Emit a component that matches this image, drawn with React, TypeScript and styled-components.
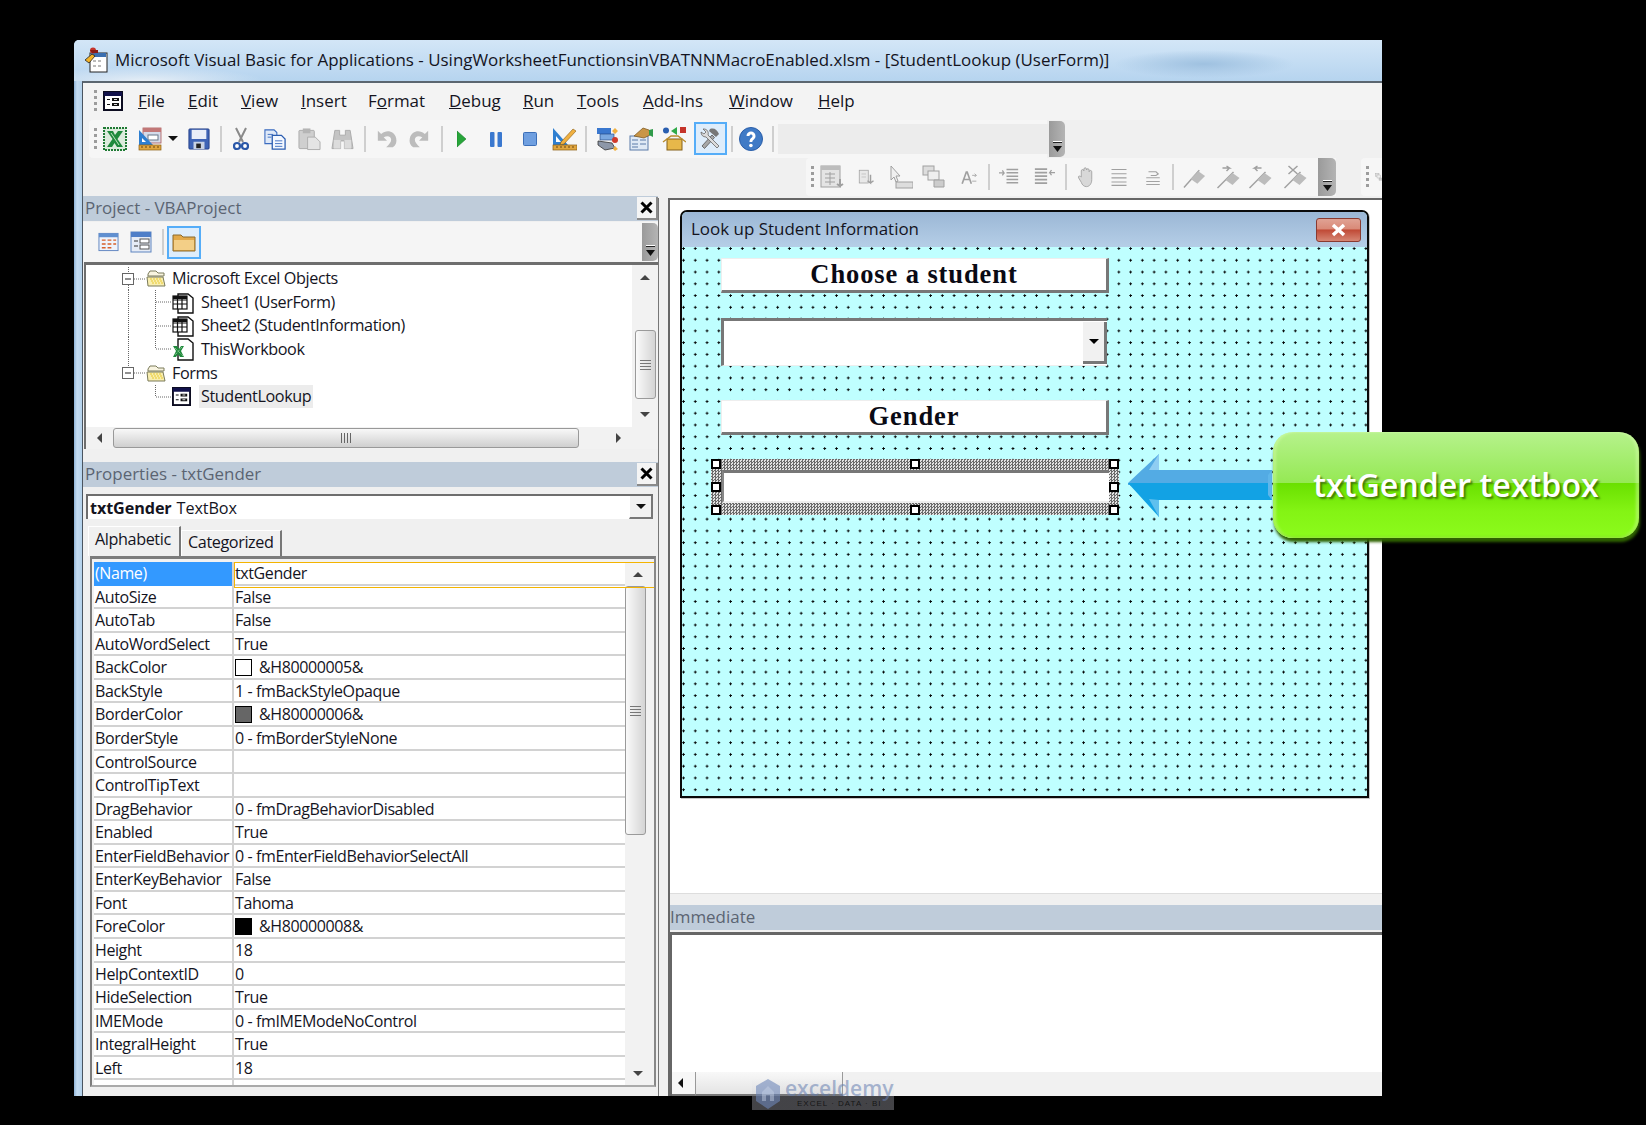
import React from "react";
import styled, { createGlobalStyle } from "styled-components";

const GlobalStyle = createGlobalStyle`
  html, body {
    margin: 0;
    padding: 0;
    background: #000;
    overflow: hidden;
  }
  * { box-sizing: border-box; }
`;

const uiFont = `"Open Sans", "Liberation Sans", sans-serif`;

const propRows: { name: string; value: string; swatch?: string }[] = [
  { name: "AutoSize", value: "False" },
  { name: "AutoTab", value: "False" },
  { name: "AutoWordSelect", value: "True" },
  { name: "BackColor", value: "&H80000005&", swatch: "#fff" },
  { name: "BackStyle", value: "1 - fmBackStyleOpaque" },
  { name: "BorderColor", value: "&H80000006&", swatch: "#666" },
  { name: "BorderStyle", value: "0 - fmBorderStyleNone" },
  { name: "ControlSource", value: "" },
  { name: "ControlTipText", value: "" },
  { name: "DragBehavior", value: "0 - fmDragBehaviorDisabled" },
  { name: "Enabled", value: "True" },
  { name: "EnterFieldBehavior", value: "0 - fmEnterFieldBehaviorSelectAll" },
  { name: "EnterKeyBehavior", value: "False" },
  { name: "Font", value: "Tahoma" },
  { name: "ForeColor", value: "&H80000008&", swatch: "#000" },
  { name: "Height", value: "18" },
  { name: "HelpContextID", value: "0" },
  { name: "HideSelection", value: "True" },
  { name: "IMEMode", value: "0 - fmIMEModeNoControl" },
  { name: "IntegralHeight", value: "True" },
  { name: "Left", value: "18" },
  { name: "Locked", value: "False" },
];

const menuItems = [
  { key: "F", rest: "ile", w: 50 },
  { key: "E", rest: "dit", w: 53 },
  { key: "V", rest: "iew", w: 60 },
  { key: "I", rest: "nsert", w: 67 },
  { pre: "F", key: "o", rest: "rmat", w: 81 },
  { key: "D", rest: "ebug", w: 74 },
  { key: "R", rest: "un", w: 54 },
  { key: "T", rest: "ools", w: 66 },
  { key: "A", rest: "dd-Ins", w: 86 },
  { key: "W", rest: "indow", w: 89 },
  { key: "H", rest: "elp", w: 50 },
];

/* ---------- layout ---------- */

const Page = styled.div`
  position: relative;
  width: 1646px;
  height: 1125px;
  background: #000;
  padding: 40px 0 0 74px;
  font-family: ${uiFont};
  color: #14141e;
`;

const Window = styled.div`
  width: 1308px;
  height: 1056px;
  display: flex;
  flex-direction: column;
  background: linear-gradient(90deg, #8fb4d8 0, #c4dcf2 3px, #b4d2ec 8px);
  border-top-left-radius: 5px;
  overflow: hidden;
`;

const TitleBar = styled.div`
  height: 41px;
  flex: none;
  display: flex;
  align-items: center;
  padding: 0 0 2px 10px;
  gap: 7px;
  font-size: 16.95px;
  white-space: nowrap;
  background:
    radial-gradient(ellipse 90px 14px at 1130px 24px, #9fc1e0 0, transparent 100%),
    radial-gradient(ellipse 120px 14px at 70px 41px, #e6eef6 0, transparent 100%),
    linear-gradient(180deg, #d3e6f7 0, #b6d4ef 100%);
`;

const Body = styled.div`
  flex: 1;
  min-height: 0;
  margin-left: 8px;
  display: flex;
  flex-direction: column;
  background: #f0f0f0;
  border-top: 2px solid #5b6670;
  border-left: 1px solid #4b5560;
`;

const MenuBar = styled.div`
  height: 37px;
  flex: none;
  display: flex;
  align-items: center;
  padding: 0 0 2px 6px;
  font-size: 16.95px;
  background: #f3f3f3;
`;

const MenuItem = styled.div<{ $w: number }>`
  width: ${(p) => p.$w}px;
  flex: none;
  white-space: nowrap;
`;

const MenuIconWrap = styled.div`
  margin: 0 15px 0 0;
  display: flex;
`;

const ToolbarRow = styled.div`
  height: 38px;
  flex: none;
  display: flex;
  align-items: center;
  background: #f0f0f0;
`;

const Toolbar = styled.div<{ $ml?: number; $w: number }>`
  margin-left: ${(p) => p.$ml ?? 0}px;
  width: ${(p) => p.$w}px;
  height: 100%;
  flex: none;
  display: flex;
  align-items: center;
  padding-bottom: 1px;
  background: #f6f6f6;
  border-radius: 4px 0 0 4px;
`;

const Gripper = styled.div<{ $h?: number }>`
  width: 3px;
  height: ${(p) => p.$h ?? 22}px;
  margin-left: 5px;
  margin-right: 6px;
  flex: none;
  background: repeating-linear-gradient(180deg, #9c9c9c 0 3px, transparent 3px 6px);
`;

const ToolSlot = styled.div<{ $ml: number; $w: number }>`
  margin-left: ${(p) => p.$ml}px;
  width: ${(p) => p.$w}px;
  height: 24px;
  flex: none;
  display: flex;
  align-items: center;
  justify-content: center;
  svg { display: block; width: 100%; height: 100%; }
`;

const ToolSep = styled.div<{ $ml: number }>`
  margin-left: ${(p) => p.$ml}px;
  width: 2px;
  height: 26px;
  flex: none;
  background: #cfcfcf;
`;

const ActiveTool = styled.div<{ $ml: number; $w: number; $h: number }>`
  margin-left: ${(p) => p.$ml}px;
  width: ${(p) => p.$w}px;
  height: ${(p) => p.$h}px;
  flex: none;
  display: flex;
  align-items: center;
  justify-content: center;
  background: #deedfb;
  border: 2px solid #55adf8;
  svg { display: block; }
`;

const ChevronGrip = styled.div<{ $w: number; $h: number }>`
  width: ${(p) => p.$w}px;
  height: ${(p) => p.$h}px;
  flex: none;
  display: flex;
  align-items: flex-end;
  justify-content: center;
  padding-bottom: 3px;
  background: linear-gradient(90deg, #9a9a9a, #b4b4b4);
  border-radius: 0 5px 5px 0;
`;

const DisabledField = styled.div<{ $ml: number; $w: number }>`
  margin-left: ${(p) => p.$ml}px;
  width: ${(p) => p.$w}px;
  height: 30px;
  flex: none;
  background: #ececec;
`;

const Panes = styled.div`
  flex: 1;
  min-height: 0;
  display: flex;
`;

const LeftCol = styled.div`
  width: 575px;
  flex: none;
  display: flex;
  flex-direction: column;
  padding-bottom: 5px;
`;

const Splitter = styled.div`
  width: 12px;
  flex: none;
  background: #f0f0f0;
  border-left: 1px solid #777;
  border-right: 2px solid #666;
  margin-top: 2px;
`;

const RightCol = styled.div`
  flex: 1;
  min-width: 0;
  display: flex;
  flex-direction: column;
`;

const PaneTitle = styled.div<{ $mt?: number }>`
  height: 25px;
  flex: none;
  margin-top: ${(p) => p.$mt ?? 0}px;
  display: flex;
  align-items: center;
  justify-content: space-between;
  padding-left: 2px;
  font-size: 16.95px;
  color: #5b6472;
  background: #bfccda;
  > span { margin-top: -3px; }
`;

const CloseBox = styled.div`
  width: 21px;
  height: 23px;
  display: flex;
  align-items: center;
  justify-content: center;
  background: #f4f4f4;
  border-right: 2px solid #8a8a8a;
  border-bottom: 2px solid #8a8a8a;
`;

const ProjectBar = styled.div`
  height: 40px;
  flex: none;
  margin-top: 1px;
  display: flex;
  align-items: center;
  background: #f5f5f5;
`;

const ProjectTool = styled.div<{ $ml: number; $w: number }>`
  margin-left: ${(p) => p.$ml}px;
  width: ${(p) => p.$w}px;
  height: 22px;
  flex: none;
  svg { display: block; width: 100%; height: 100%; }
`;

const Spacer = styled.div`
  flex: 1;
`;

const TreePane = styled.div`
  height: 187px;
  flex: none;
  margin-left: 1px;
  display: flex;
  flex-direction: column;
  border-top: 3px solid #6e6e6e;
  border-left: 2px solid #6e6e6e;
`;

const TreeMain = styled.div`
  flex: 1;
  min-height: 0;
  display: flex;
`;

const TreeList = styled.div`
  flex: 1;
  background: #fff;
  padding-top: 2px;
  display: grid;
  grid-auto-rows: 23.57px;
  align-content: start;
`;

const TreeRow = styled.div`
  display: flex;
  align-items: center;
  font-size: 16.2px;
  letter-spacing: -0.4px;
  white-space: nowrap;
  svg { display: block; flex: none; }
`;

const TreeText = styled.span<{ $ml: number; $selected?: boolean }>`
  margin-left: ${(p) => p.$ml}px;
  padding: 0 2px;
  line-height: 23px;
  background: ${(p) => (p.$selected ? "#ececec" : "transparent")};
`;

const VScroll = styled.div<{ $w: number }>`
  width: ${(p) => p.$w}px;
  flex: none;
  display: flex;
  flex-direction: column;
  align-items: center;
  background: #f2f2f2;
`;

const ScrollArrow = styled.div<{ $h: number }>`
  height: ${(p) => p.$h}px;
  flex: none;
  display: flex;
  align-items: center;
  justify-content: center;
`;

const Triangle = styled.div<{ $dir: "up" | "down" | "left" | "right"; $color?: string }>`
  width: 0;
  height: 0;
  border-style: solid;
  border-color: transparent;
  ${(p) => {
    const c = p.$color ?? "#444";
    if (p.$dir === "up") return `border-width: 0 5px 5px 5px; border-bottom-color: ${c};`;
    if (p.$dir === "down") return `border-width: 5px 5px 0 5px; border-top-color: ${c};`;
    if (p.$dir === "left") return `border-width: 5px 5px 5px 0; border-right-color: ${c};`;
    return `border-width: 5px 0 5px 5px; border-left-color: ${c};`;
  }}
`;

const VThumb = styled.div<{ $w: number; $h: number; $start?: boolean }>`
  width: ${(p) => p.$w}px;
  height: ${(p) => p.$h}px;
  flex: none;
  align-self: ${(p) => (p.$start ? "flex-start" : "center")};
  display: flex;
  align-items: center;
  justify-content: center;
  background: linear-gradient(90deg, #fafafa, #d4d4d4);
  border: 1px solid #9a9a9a;
  border-radius: 3px;
`;

const GripLines = styled.div`
  width: 11px;
  height: 10px;
  background: repeating-linear-gradient(180deg, #777 0 1px, transparent 1px 3px);
`;

const HScroll = styled.div`
  height: 22px;
  flex: none;
  display: flex;
  align-items: center;
  padding-right: 1px;
  background: #f2f2f2;
`;

const HArrow = styled.div<{ $w: number }>`
  width: ${(p) => p.$w}px;
  flex: none;
  display: flex;
  justify-content: center;
`;

const HThumb = styled.div`
  flex: 1;
  height: 20px;
  display: flex;
  align-items: center;
  justify-content: center;
  background: linear-gradient(180deg, #f8f8f8, #cfcfcf);
  border: 1px solid #999;
  border-radius: 3px;
`;

const GripLinesV = styled.div`
  width: 10px;
  height: 10px;
  background: repeating-linear-gradient(90deg, #666 0 1px, transparent 1px 3px);
`;

const PropsCombo = styled.div`
  height: 25px;
  flex: none;
  margin: 7px 5px 0 3px;
  display: flex;
  align-items: center;
  padding-left: 2px;
  font-size: 16.2px;
  letter-spacing: -0.1px;
  background: #fff;
  border-top: 2px solid #6e6e6e;
  border-left: 2px solid #6e6e6e;
  strong { font-weight: 700; margin-right: 5px; }
`;

const ComboButton = styled.div<{ $w: number }>`
  margin-left: auto;
  width: ${(p) => p.$w}px;
  height: 100%;
  flex: none;
  display: flex;
  align-items: center;
  justify-content: center;
  background: #f1f1f1;
  border-right: 2px solid #777;
  border-bottom: 2px solid #777;
  border-left: 1px solid #fff;
`;

const Tabs = styled.div`
  height: 32px;
  flex: none;
  margin: 5px 0 0 5px;
  display: flex;
  align-items: flex-end;
  font-size: 16.2px;
  letter-spacing: -0.4px;
`;

const Tab = styled.div<{ $active?: boolean; $w: number }>`
  width: ${(p) => p.$w}px;
  height: ${(p) => (p.$active ? 30 : 26)}px;
  display: flex;
  align-items: center;
  padding-left: 6px;
  padding-bottom: ${(p) => (p.$active ? 5 : 3)}px;
  white-space: nowrap;
  border-right: 2px solid #777;
  border-top: 1px solid #fff;
  border-left: 1px solid #fff;
`;

const GridFrame = styled.div`
  position: relative;
  height: 531px;
  flex: none;
  margin: 0 2px 0 7px;
  padding: 3px 3px 0 2px;
  display: flex;
  border-top: 3px solid #7c7c7c;
  border-left: 2px solid #7c7c7c;
  border-right: 2px solid #888;
  border-bottom: 2px solid #aaa;
  overflow: hidden;
  background: #f2f2f2;
`;

const GridRows = styled.div`
  width: 531px;
  flex: none;
  display: grid;
  grid-auto-rows: 23.57px;
  align-content: start;
  background: #fff;
`;

const GridRow = styled.div`
  display: grid;
  grid-template-columns: 140px 1fr;
  border-bottom: 2px solid #d2d2d2;
  font-size: 16px;
  letter-spacing: -0.4px;
  white-space: nowrap;
`;

const NameCell = styled.div<{ $selected?: boolean }>`
  display: flex;
  align-items: center;
  padding: 0 0 2px 1px;
  color: ${(p) => (p.$selected ? "#fff" : "inherit")};
  background: ${(p) => (p.$selected ? "#3399ff" : "transparent")};
  border-right: 2px solid #d2d2d2;
`;

const ValueCell = styled.div`
  display: flex;
  align-items: center;
  padding: 0 0 2px 1px;
`;

const Swatch = styled.div<{ $color: string }>`
  width: 17px;
  height: 17px;
  margin: 0 7px 0 0;
  flex: none;
  background: ${(p) => p.$color};
  border: 1px solid #000;
`;

const FocusRing = styled.div`
  position: absolute;
  left: 142px;
  top: 3px;
  width: 421px;
  height: 26px;
  border: 1px solid #f4b400;
  pointer-events: none;
`;

/* ---------- MDI side ---------- */

const MdiArea = styled.div`
  height: 695px;
  flex: none;
  margin-top: 2px;
  padding: 10px 0 0 10px;
  background: #fff;
  border-top: 2px solid #666;
`;

const UserForm = styled.div`
  width: 689px;
  height: 588px;
  display: flex;
  flex-direction: column;
  border: 2px solid #0a0a0a;
  border-radius: 7px 7px 0 0;
  background: #bfffff;
  overflow: hidden;
  box-shadow: 1px 1px 0 #c8c8c8;
`;

const FormTitle = styled.div`
  height: 35px;
  flex: none;
  display: flex;
  align-items: center;
  justify-content: space-between;
  padding: 0 6px 0 9px;
  font-size: 16.95px;
  background: linear-gradient(180deg, #9bb7d5, #b5cee7);
  > span { margin-top: -3px; }
`;

const FormClose = styled.div`
  width: 45px;
  height: 24px;
  display: flex;
  align-items: center;
  justify-content: center;
  border: 1px solid #8a3a30;
  border-radius: 3px;
  background: linear-gradient(180deg, #e0a294 0, #d98a78 45%, #c04a36 50%, #d68674 100%);
`;

const FormCanvas = styled.div`
  flex: 1;
  display: flex;
  flex-direction: column;
  align-items: flex-start;
  padding: 11px 0 0 39px;
  background-color: #bfffff;
  background-image: radial-gradient(circle at 1.5px 1.5px, #000 0.95px, transparent 1.25px);
  background-size: 11.77px 11.77px;
  background-position: 0 0;
`;

const FormLabel = styled.div<{ $mt?: number }>`
  width: 388px;
  height: 35px;
  margin-top: ${(p) => p.$mt ?? 0}px;
  flex: none;
  display: flex;
  align-items: center;
  justify-content: center;
  padding-bottom: 1px;
  font-family: "Liberation Serif", "DejaVu Serif", serif;
  font-weight: 700;
  font-size: 26.5px;
  letter-spacing: 0.9px;
  color: #0a0a14;
  background: #fff;
  border-right: 3px solid #777;
  border-bottom: 3px solid #777;
  border-top: 1px solid #eee;
  border-left: 1px solid #eee;
`;

const FormCombo = styled.div`
  width: 386px;
  height: 48px;
  margin-top: 25px;
  flex: none;
  display: flex;
  justify-content: flex-end;
  padding: 1px 0 1px 0;
  background: #fff;
  border-top: 3px solid #777;
  border-left: 3px solid #777;
  border-bottom: 1px solid #eee;
`;

const FormDrop = styled.div`
  width: 24px;
  flex: none;
  display: flex;
  align-items: center;
  justify-content: center;
  background: #f1f1f1;
  border-right: 3px solid #777;
  border-bottom: 3px solid #777;
`;

const SelectionFrame = styled.div`
  position: relative;
  width: 408px;
  height: 56px;
  margin: 24px 0 0 -10px;
  flex: none;
  padding: 11px 10px 12px 11px;
  background: repeating-conic-gradient(#6a6a6a 0 25%, #e2e2e2 0 50%) 0 0 / 3px 3px;
`;

const SelectedTextBox = styled.div`
  height: 100%;
  background: #fff;
  border-top: 3px solid #777;
  border-left: 2px solid #888;
  border-bottom: 2px solid #eee;
`;

const Handle = styled.div<{ $x: "l" | "c" | "r"; $y: "t" | "m" | "b" }>`
  position: absolute;
  width: 10px;
  height: 10px;
  background: #fff;
  border: 2px solid #000;
  ${(p) => (p.$x === "l" ? "left: 0;" : p.$x === "r" ? "right: 0;" : "left: calc(50% - 5px);")}
  ${(p) => (p.$y === "t" ? "top: 0;" : p.$y === "b" ? "bottom: 0;" : "top: calc(50% - 5px);")}
`;

const MdiGap = styled.div`
  height: 12px;
  flex: none;
  background: #f0f0f0;
  border-top: 1px solid #ddd;
`;

const ImmediateTitle = styled(PaneTitle)`
  justify-content: flex-start;
  padding-left: 0;
`;

const ImmediateBody = styled.div`
  flex: 1;
  min-height: 0;
  margin-top: 2px;
  display: flex;
  flex-direction: column;
  justify-content: flex-end;
  background: #fff;
  border-top: 3px solid #666;
  border-left: 2px solid #666;
`;

const ImmediateScroll = styled.div`
  height: 24px;
  flex: none;
  display: flex;
  background: #f1f1f1;
`;

const ImmediateArrow = styled.div`
  width: 24px;
  display: flex;
  align-items: center;
  padding-left: 6px;
  background: #f7f7f7;
  border-right: 1px solid #999;
  border-bottom: 2px solid #777;
`;

const ImmediateThumb = styled.div`
  width: 147px;
  background: linear-gradient(180deg, #f8f8f8, #e4e4e4);
  border-right: 1px solid #999;
  border-bottom: 2px solid #777;
`;

/* ---------- overlays ---------- */

const ArrowOverlay = styled.svg`
  position: absolute;
  left: 1126px;
  top: 452px;
`;

const Callout = styled.div`
  position: absolute;
  left: 1273px;
  top: 432px;
  width: 366px;
  height: 106px;
  display: flex;
  align-items: center;
  justify-content: center;
  padding: 0 0 2px 0;
  border-radius: 20px;
  font-size: 32.2px;
  font-weight: 600;
  color: #fff;
  text-shadow: 2px 2px 2px rgba(50, 90, 0, 0.75);
  white-space: nowrap;
  background: linear-gradient(180deg, #b6f28c 0, #95e954 48%, #6ae000 48.5%, #84f414 75%, #8cfb1c 100%);
  box-shadow: inset 0 -2px 2px rgba(110, 200, 10, 0.3), inset 3px 0 3px rgba(220, 255, 180, 0.45),
    inset -3px 0 3px rgba(220, 255, 180, 0.45), 1px 4px 3px #2f6400;
`;

const Watermark = styled.div`
  position: absolute;
  left: 752px;
  top: 1078px;
  width: 142px;
  height: 32px;
  display: flex;
  align-items: flex-start;
  padding-left: 3px;
  background: linear-gradient(180deg, rgba(120, 130, 160, 0) 0, rgba(120, 130, 160, 0.05) 55%, rgba(90, 90, 95, 0.75) 56%, rgba(90, 90, 95, 0.75) 100%);
  svg { flex: none; margin-top: 1px; }
`;

const WatermarkText = styled.div`
  margin-left: 4px;
  display: flex;
  flex-direction: column;
  align-items: center;
  line-height: 1;
`;

const WatermarkName = styled.span`
  font-size: 21px;
  font-weight: 600;
  color: rgba(100, 125, 175, 0.55);
  line-height: 20px;
`;

const WatermarkTag = styled.span`
  margin-top: 2px;
  font-family: "Liberation Sans", sans-serif;
  font-size: 8px;
  letter-spacing: 1px;
  color: rgba(15, 15, 15, 0.9);
`;

/* ---------- icons ---------- */

const TitleIcon = () => (
  <svg width="24" height="26" viewBox="0 0 24 26">
    <rect x="6" y="6" width="17" height="19" fill="#fff" stroke="#222" />
    <rect x="7" y="6" width="15" height="4" fill="#3b6fb0" />
    <g fill="#bbb">
      <rect x="9" y="13" width="3" height="2" /><rect x="14" y="13" width="3" height="2" />
      <rect x="9" y="18" width="3" height="2" /><rect x="14" y="18" width="3" height="2" />
    </g>
    <path d="M1 13l7-6 3 2-6 7z" fill="#f3b32a" stroke="#222" strokeWidth=".8" />
    <circle cx="9" cy="3.5" r="3" fill="#c5342a" />
    <path d="M6 3h8v3H8z" fill="#8b1c16" />
  </svg>
);

const FormIcon = ({ size = 20 }: { size?: number }) => (
  <svg width={size} height={size} viewBox="0 0 20 20">
    <rect x="1" y="1" width="18" height="18" fill="#fff" stroke="#0c0c20" strokeWidth="2" />
    <rect x="1" y="1" width="18" height="4" fill="#11114a" />
    <path d="M4 8h3v1H4zM4 13h3v1H4zM9 7h7v3H9zM9 12h7v3H9z" fill="#111" />
    <path d="M11 8h3v1h-3zM11 13h3v1h-3z" fill="#ddd" />
  </svg>
);

const ExcelIcon = () => (
  <svg viewBox="0 0 24 24">
    <rect x="1" y="1" width="22" height="22" fill="#dcebdc" stroke="#1f7a34" strokeWidth="2" strokeDasharray="2 1" />
    <path d="M4 4h6l2 4 3-4h5l-5.500 8L20 20h-6l-2.500-4-2.500 4H4l5.500-8z" fill="#1f8a3c" />
    <path d="M8 6l8 12" stroke="#bfe3bf" />
  </svg>
);

const DesignFormIcon = () => (
  <svg viewBox="0 0 24 24">
    <rect x="5" y="1" width="18" height="15" fill="#d4dbea" stroke="#a55" strokeWidth=".8" />
    <rect x="5" y="1" width="18" height="4" fill="#c27878" />
    <rect x="10" y="8" width="10" height="5" fill="#fff" stroke="#678" />
    <path d="M1 3l14 15H1z" fill="#2f7fd0" />
    <path d="M4 11l4 4H4z" fill="#fff" />
    <rect x="1" y="18" width="22" height="5" fill="#e0a640" stroke="#8a5c10" strokeWidth=".7" />
    <path d="M4 19v2M8 19v2M12 19v2M16 19v2M20 19v2" stroke="#6b4510" />
  </svg>
);

const SaveIcon = () => (
  <svg viewBox="0 0 24 24">
    <rect x="1" y="1" width="22" height="22" rx="1" fill="#3e63b5" stroke="#24408a" />
    <rect x="4" y="2" width="16" height="10" fill="#e9eef8" />
    <rect x="6" y="15" width="12" height="8" fill="#c8d2e4" />
    <rect x="9" y="17" width="5" height="5" fill="#222" />
  </svg>
);

const CutIcon = () => (
  <svg viewBox="0 0 16 24">
    <path d="M3 1l7 14M13 1L6 15" stroke="#8a8a8a" strokeWidth="2" fill="none" />
    <circle cx="4" cy="19" r="3" fill="#fff" stroke="#2a57a8" strokeWidth="2.2" />
    <circle cx="12" cy="19" r="3" fill="#fff" stroke="#2a57a8" strokeWidth="2.2" />
  </svg>
);

const CopyIcon = () => (
  <svg viewBox="0 0 24 24">
    <path d="M1 2h10l3 3v12H1z" fill="#dfe9f8" stroke="#3b6cc0" strokeWidth="1.2" />
    <path d="M9 8h10l4 4v11H9z" fill="#f4f8ff" stroke="#2b5db0" strokeWidth="1.4" />
    <path d="M4 7h6M4 10h4M12 14h8M12 17h8M12 20h8" stroke="#3b6cc0" />
  </svg>
);

const PasteIcon = () => (
  <svg viewBox="0 0 24 24">
    <rect x="1" y="3" width="16" height="19" rx="1" fill="#cfcfcf" stroke="#aaa" />
    <rect x="5" y="1" width="8" height="5" fill="#b5b5b5" />
    <path d="M10 10h8l5 5v8H10z" fill="#e4e4e4" stroke="#adadad" />
  </svg>
);

const FindIcon = () => (
  <svg viewBox="0 0 24 24">
    <path d="M4 3h5v5h6V3h5l3 19h-9v-8h-4v8H1z" fill="#c4c4c4" stroke="#aaa" />
    <rect x="3" y="13" width="7" height="9" fill="#dcdcdc" />
    <rect x="14" y="13" width="7" height="9" fill="#dcdcdc" />
  </svg>
);

const UndoIcon = ({ flip }: { flip?: boolean }) => (
  <svg viewBox="0 0 24 24">
    <g transform={flip ? "translate(24 0) scale(-1 1)" : undefined}>
      <path d="M1 2v12h11L8 10c5-3 9-1 9 3 0 3-3 6-6 9h8c4-3 5-7 4-11C21 3 12 0 5 6z" fill="#bcbcbc" />
    </g>
  </svg>
);

const RunIcon = () => (
  <svg viewBox="0 0 9 24">
    <path d="M0 4l9 8-9 8z" fill="#27a53a" stroke="#1a7f2a" strokeWidth=".6" />
  </svg>
);

const PauseIcon = () => (
  <svg viewBox="0 0 12 24">
    <rect x="0" y="5" width="4.500" height="15" rx="1" fill="#3a78cf" />
    <rect x="7.500" y="5" width="4.500" height="15" rx="1" fill="#3a78cf" />
  </svg>
);

const StopIcon = () => (
  <svg viewBox="0 0 14 24">
    <rect x="0.500" y="5.500" width="13" height="13" rx="1" fill="#6f9fe0" stroke="#3c6fb8" />
  </svg>
);

const DesignIcon = () => (
  <svg viewBox="0 0 25 24">
    <path d="M1 1l15 17H1z" fill="#2f7fd0" />
    <path d="M4 9l5 6H4z" fill="#fff" />
    <path d="M9 15L21 2l3 2-12 13-4 1z" fill="#f0b040" stroke="#8a5c10" strokeWidth=".6" />
    <rect x="1" y="18" width="24" height="5" fill="#e0a640" stroke="#8a5c10" strokeWidth=".7" />
    <path d="M5 19v2M9 19v2M13 19v2M17 19v2M21 19v2" stroke="#6b4510" />
  </svg>
);

const ExplorerIcon = () => (
  <svg viewBox="0 0 24 24">
    <rect x="1" y="1" width="14" height="6" fill="#3a78cf" />
    <rect x="4" y="7" width="14" height="6" fill="#7aa8e0" stroke="#1d3f7a" strokeWidth=".6" />
    <path d="M2 14l14 2 3 5-10 2-7-5z" fill="#8d97a8" stroke="#333" strokeWidth=".8" />
    <path d="M19 1l3 3-3 3-3-3zM19 19l3 3-3 2-2-2z" fill="#f0b040" />
    <circle cx="19" cy="13" r="3" fill="#d23a2a" />
  </svg>
);

const PropsIcon = () => (
  <svg viewBox="0 0 24 24">
    <rect x="1" y="9" width="18" height="14" fill="#dfe9f5" stroke="#5b7ba8" />
    <path d="M3 13h6M11 13h6M3 17h6M11 17h6M3 20h6" stroke="#5b7ba8" />
    <path d="M5 9L14 1l6 2 3 4-8 4z" fill="#c99545" stroke="#75521a" strokeWidth=".7" />
    <path d="M20 3l4-1v8l-4-2z" fill="#2f9a4a" />
  </svg>
);

const BrowserIcon = () => (
  <svg viewBox="0 0 24 24">
    <rect x="5" y="12" width="15" height="11" fill="#e7b84a" stroke="#84601a" />
    <path d="M5 12l-4 3M20 12l4 3M5 12l4-3h7l4 3" fill="none" stroke="#b98c2c" strokeWidth="1.4" />
    <circle cx="4" cy="3.5" r="3" fill="#2a5fb0" />
    <path d="M9 4l6-4v8z" fill="#2faa48" />
    <rect x="18" y="0" width="6" height="6" fill="#c5342a" />
  </svg>
);

const ToolsIcon = () => (
  <svg width="25" height="25" viewBox="0 0 25 25">
    <path d="M4 20L14 9l2.500 2.500L6.500 22.500z" fill="#a8a8a8" stroke="#555" strokeWidth=".8" />
    <path d="M12 3c4-1.500 7 .5 9 5l-3 3-7-6z" fill="#777" />
    <path d="M21 20L10 9c1-3-1-6-4-6l-1 0 3 3-2 2-3-2c0 3 2 5 5 5l11 11z" fill="#dcdcdc" stroke="#666" strokeWidth=".8" />
  </svg>
);

const HelpIcon = () => (
  <svg viewBox="0 0 24 24">
    <circle cx="12" cy="12" r="11.500" fill="#3f7ac6" stroke="#2b5ea8" />
    <path d="M7.500 9c0-6 9-6 9 0 0 3.500-3.200 3.500-3.200 6h-2.800c0-4 3-4 3-6 0-2-3-2-3 0z" fill="#fff" />
    <circle cx="11.900" cy="18.500" r="1.800" fill="#fff" />
  </svg>
);

const g1 = "#bcbcbc";
const g2 = "#a0a0a0";

const DisabledIcon = ({ kind }: { kind: number }) => {
  const shapes: Record<number, React.ReactNode> = {
    0: (<><rect x="1" y="1" width="19" height="21" fill="#e4e4e4" stroke={g2} /><rect x="1" y="1" width="19" height="4" fill={g1} /><path d="M5 9h10M5 13h10M5 17h10M10 7v13" stroke={g2} /><path d="M20 14v7l-3-2M20 21l3-2" stroke={g2} strokeWidth="2" fill="none" /></>),
    1: (<><rect x="3" y="3" width="12" height="17" fill="#e8e8e8" stroke={g2} /><path d="M6 8h6M6 12h6" stroke={g1} /><path d="M18 9v11l-4-3M18 20l4-3" stroke={g2} strokeWidth="2" fill="none" /></>),
    2: (<><path d="M2 1v14l3-3 2 5 2-1-2-5h4z" fill="#f0f0f0" stroke={g2} /><rect x="7" y="17" width="17" height="6" fill="#ddd" stroke={g2} /></>),
    3: (<><rect x="1" y="1" width="11" height="9" fill="#ddd" stroke={g2} /><rect x="6" y="6" width="11" height="9" fill="#eee" stroke={g2} /><path d="M12 15h10v7H12z" fill="#ccc" stroke={g2} /></>),
    4: (<><path d="M5 20l5-14h1l5 14M7 15h7" stroke={g2} strokeWidth="2" fill="none" /><path d="M17 10h5l-2-2M22 10l-2 2M17 17h5" stroke={g2} fill="none" /></>),
    5: (<><path d="M9 3h14M9 7h14M9 11h14M9 15h14M9 19h14" stroke={g2} strokeWidth="1.800" /><path d="M0 7h6l-2-3M6 7l-2 3" stroke={g2} strokeWidth="1.500" fill="none" /></>),
    6: (<><path d="M1 3h14M1 7h14M1 11h14M1 15h14M1 19h14" stroke={g2} strokeWidth="1.800" /><path d="M24 7h-6l2-3M18 7l2 3" stroke={g2} strokeWidth="1.500" fill="none" /></>),
    7: (<path d="M6 12V5c0-2 3-2 3 0V3c0-2 3-2 3 0v1c0-2 3-2 3 0v2c0-2 3-2 3 0v9c0 5-3 8-6 8s-5-2-6-5l-3-5c-1-2 1-3 3-1z" fill="#d8d8d8" stroke={g2} />),
    8: (<path d="M3 3h18M3 8h18M3 13h18M3 18h18M3 22h18" stroke={g2} strokeWidth="1.300" />),
    9: (<><path d="M3 13h18M3 18h18M3 22h18" stroke={g2} strokeWidth="1.300" /><path d="M6 5h10l3 3-3 2H9" stroke={g2} strokeWidth="1.500" fill="none" /></>),
    10: (<><path d="M1 23L17 5" stroke={g2} strokeWidth="1.500" /><path d="M8 14l8-8 7 5-8 8z" fill={g1} /></>),
    11: (<><path d="M1 23L17 7" stroke={g2} strokeWidth="1.500" /><path d="M9 15l7-7 7 5-7 7z" fill={g1} /><path d="M6 3h7l-3-2M13 3l-3 3" stroke={g2} strokeWidth="1.500" fill="none" /></>),
    12: (<><path d="M1 23L17 7" stroke={g2} strokeWidth="1.500" /><path d="M9 15l7-7 7 5-7 7z" fill={g1} /><path d="M13 3H6l3-2M6 3l3 3" stroke={g2} strokeWidth="1.500" fill="none" /></>),
    13: (<><path d="M1 23L17 7" stroke={g2} strokeWidth="1.500" /><path d="M9 15l7-7 7 5-7 7z" fill={g1} /><path d="M5 1l9 8M14 1L5 9" stroke={g2} strokeWidth="1.500" /></>),
  };
  return <svg viewBox="0 0 24 24">{shapes[kind]}</svg>;
};

const CloseX = () => (
  <svg width="13" height="13" viewBox="0 0 13 13">
    <path d="M1.500 1.500l10 10M11.500 1.500l-10 10" stroke="#000" strokeWidth="3" />
  </svg>
);

const DropChevron = () => (
  <svg width="11" height="13" viewBox="0 0 11 13">
    <rect x="1" y="0" width="9" height="2" fill="#fff" />
    <rect x="1" y="1" width="9" height="1" fill="#222" />
    <path d="M1 5h9L5.500 11z" fill="#111" />
  </svg>
);

const ViewCodeIcon = () => (
  <svg viewBox="0 0 22 22">
    <rect x="1" y="2" width="20" height="18" fill="#eef3fb" stroke="#5f85c0" />
    <rect x="1" y="2" width="20" height="4" fill="#5f8fd0" />
    <path d="M4 9h4M10 9h4M16 9h3M4 13h4M10 13h4M16 13h3M4 17h4M10 17h4" stroke="#d8602a" strokeWidth="1.500" />
  </svg>
);

const ViewObjectIcon = () => (
  <svg viewBox="0 0 22 22">
    <rect x="1" y="1" width="20" height="20" fill="#e6ecf6" stroke="#5f85c0" />
    <rect x="1" y="1" width="20" height="5" fill="#4f7fc8" />
    <path d="M4 10h4M4 15h4" stroke="#333" />
    <rect x="10" y="8" width="9" height="4" fill="#fff" stroke="#555" />
    <rect x="10" y="14" width="9" height="4" fill="#fff" stroke="#555" />
  </svg>
);

const FolderBig = () => (
  <svg width="24" height="20" viewBox="0 0 24 20">
    <path d="M1 3h8l2 2h12v14H1z" fill="#e2a94a" stroke="#8b6a2c" />
    <path d="M2 8h20v10H2z" fill="#f3cf87" />
  </svg>
);

const TreeFolder = () => (
  <svg width="20" height="19" viewBox="0 0 20 19">
    <path d="M2 5l2-3h6l2 2h6v3H2z" fill="#f8f4e0" stroke="#7a7a5a" />
    <path d="M1 8h16l2 9H2z" fill="#f8eeb0" stroke="#7a7a5a" />
    <path d="M4 10h12M5 12h12M6 14h12" stroke="#e8c830" strokeDasharray="2 1" />
  </svg>
);

const SheetIcon = () => (
  <svg width="22" height="23" viewBox="0 0 22 23">
    <path d="M6 3h10l5 4v15H6z" fill="#fff" stroke="#111" strokeWidth="1.400" />
    <rect x="1" y="5" width="14" height="13" fill="#fff" stroke="#111" strokeWidth="1.200" />
    <path d="M1 9h14M1 13h14M5.500 5v13M10 5v13" stroke="#111" strokeWidth="1.200" />
    <rect x="1" y="5" width="14" height="3" fill="#111" />
  </svg>
);

const WorkbookIcon = () => (
  <svg width="22" height="23" viewBox="0 0 22 23">
    <path d="M6 1h10l5 4v17H6z" fill="#fff" stroke="#111" strokeWidth="1.400" />
    <path d="M1 8h4l2 3 2-3h3l-3 5 3 6H8l-2-3-2 3H1l3-6z" fill="#1f8a3c" />
    <path d="M3 10l8 8M10 9l-7 8" stroke="#a9d8a9" strokeDasharray="1 1" />
  </svg>
);

type GutterKind = "objects" | "sheet" | "workbook" | "forms" | "form";

const TreeGutter = ({ kind, w }: { kind: GutterKind; w: number }) => {
  const dotted = { stroke: "#666", strokeDasharray: "1 1", fill: "none" } as const;
  const box = (
    <>
      <rect x="36.500" y="6.500" width="11" height="11" fill="#fff" stroke="#666" />
      <path d="M39 12h6" stroke="#222" />
      <path d="M48 12h12" {...dotted} />
    </>
  );
  return (
    <svg width={w} height="24" viewBox={`0 0 ${w} 24`}>
      {kind === "objects" && (<><path d="M42.500 0v6M42.500 18v6" {...dotted} />{box}</>)}
      {kind === "forms" && (<><path d="M42.500 0v6" {...dotted} />{box}</>)}
      {kind === "sheet" && (<><path d="M42.500 0v24M69.500 0v24M70 12h16" {...dotted} /></>)}
      {kind === "workbook" && (<><path d="M42.500 0v24M69.500 0v12M70 12h16" {...dotted} /></>)}
      {kind === "form" && (<path d="M69.500 0v12M70 12h16" {...dotted} />)}
    </svg>
  );
};

const handles: { x: "l" | "c" | "r"; y: "t" | "m" | "b" }[] = [
  { x: "l", y: "t" }, { x: "c", y: "t" }, { x: "r", y: "t" },
  { x: "l", y: "m" }, { x: "r", y: "m" },
  { x: "l", y: "b" }, { x: "c", y: "b" }, { x: "r", y: "b" },
];

const toolbarTwo = [
  { ml: 0, w: 24, k: 0 }, { ml: 13, w: 18, k: 1 }, { ml: 14, w: 24, k: 2 }, { ml: 9, w: 24, k: 3 },
  { ml: 12, w: 20, k: 4 }, "sep", { ml: 9, w: 20, k: 5 }, { ml: 15, w: 21, k: 6 }, "sep",
  { ml: 9, w: 21, k: 7 }, { ml: 12, w: 20, k: 8 }, { ml: 15, w: 18, k: 9 }, "sep",
  { ml: 9, w: 23, k: 10 }, { ml: 10, w: 25, k: 11 }, { ml: 7, w: 25, k: 12 }, { ml: 10, w: 25, k: 13 },
] as const;

export default function App() {
  return (
    <Page>
      <GlobalStyle />
      <Window>
        <TitleBar>
          <TitleIcon />
          <span>Microsoft Visual Basic for Applications - UsingWorksheetFunctionsinVBATNNMacroEnabled.xlsm - [StudentLookup (UserForm)]</span>
        </TitleBar>
        <Body>
          <MenuBar>
            <Gripper />
            <MenuIconWrap><FormIcon /></MenuIconWrap>
            {menuItems.map((m) => (
              <MenuItem key={m.key + m.rest} $w={m.w}>
                {m.pre}<u>{m.key}</u>{m.rest}
              </MenuItem>
            ))}
          </MenuBar>

          <ToolbarRow>
            <Toolbar $ml={6} $w={958}>
              <Gripper />
              <ToolSlot $ml={0} $w={24}><ExcelIcon /></ToolSlot>
              <ToolSlot $ml={11} $w={24}><DesignFormIcon /></ToolSlot>
              <ToolSlot $ml={6} $w={9}><Triangle $dir="down" $color="#111" /></ToolSlot>
              <ToolSlot $ml={11} $w={22}><SaveIcon /></ToolSlot>
              <ToolSep $ml={10} />
              <ToolSlot $ml={11} $w={16}><CutIcon /></ToolSlot>
              <ToolSlot $ml={15} $w={22}><CopyIcon /></ToolSlot>
              <ToolSlot $ml={12} $w={23}><PasteIcon /></ToolSlot>
              <ToolSlot $ml={10} $w={23}><FindIcon /></ToolSlot>
              <ToolSep $ml={10} />
              <ToolSlot $ml={11} $w={20}><UndoIcon /></ToolSlot>
              <ToolSlot $ml={12} $w={20}><UndoIcon flip /></ToolSlot>
              <ToolSep $ml={12} />
              <ToolSlot $ml={14} $w={9}><RunIcon /></ToolSlot>
              <ToolSlot $ml={24} $w={12}><PauseIcon /></ToolSlot>
              <ToolSlot $ml={21} $w={14}><StopIcon /></ToolSlot>
              <ToolSlot $ml={15} $w={25}><DesignIcon /></ToolSlot>
              <ToolSep $ml={8} />
              <ToolSlot $ml={9} $w={24}><ExplorerIcon /></ToolSlot>
              <ToolSlot $ml={9} $w={24}><PropsIcon /></ToolSlot>
              <ToolSlot $ml={9} $w={24}><BrowserIcon /></ToolSlot>
              <ActiveTool $ml={8} $w={33} $h={33}><ToolsIcon /></ActiveTool>
              <ToolSep $ml={4} />
              <ToolSlot $ml={6} $w={24}><HelpIcon /></ToolSlot>
              <ToolSep $ml={9} />
              <DisabledField $ml={4} $w={271} />
              <ChevronGrip $w={16} $h={36}><DropChevron /></ChevronGrip>
            </Toolbar>
          </ToolbarRow>

          <ToolbarRow>
            <Toolbar $ml={723} $w={530}>
              <Gripper />
              {toolbarTwo.map((t, i) =>
                t === "sep" ? (
                  <ToolSep key={i} $ml={10} />
                ) : (
                  <ToolSlot key={i} $ml={t.ml} $w={t.w}><DisabledIcon kind={t.k} /></ToolSlot>
                )
              )}
              <Spacer />
              <ChevronGrip $w={18} $h={38}><DropChevron /></ChevronGrip>
            </Toolbar>
            <Toolbar $ml={25} $w={22}>
              <Gripper />
              <ToolSlot $ml={0} $w={8}><DisabledIcon kind={3} /></ToolSlot>
            </Toolbar>
          </ToolbarRow>

          <Panes>
            <LeftCol>
              <PaneTitle>
                <span>Project - VBAProject</span>
                <CloseBox><CloseX /></CloseBox>
              </PaneTitle>
              <ProjectBar>
                <ProjectTool $ml={15} $w={21}><ViewCodeIcon /></ProjectTool>
                <ProjectTool $ml={11} $w={22}><ViewObjectIcon /></ProjectTool>
                <ToolSep $ml={10} />
                <ActiveTool $ml={3} $w={34} $h={33}><FolderBig /></ActiveTool>
                <Spacer />
                <ChevronGrip $w={16} $h={38}><DropChevron /></ChevronGrip>
              </ProjectBar>
              <TreePane>
                <TreeMain>
                  <TreeList>
                    <TreeRow><TreeGutter kind="objects" w={60} /><TreeFolder /><TreeText $ml={4}>Microsoft Excel Objects</TreeText></TreeRow>
                    <TreeRow><TreeGutter kind="sheet" w={86} /><SheetIcon /><TreeText $ml={5}>Sheet1 (UserForm)</TreeText></TreeRow>
                    <TreeRow><TreeGutter kind="sheet" w={86} /><SheetIcon /><TreeText $ml={5}>Sheet2 (StudentInformation)</TreeText></TreeRow>
                    <TreeRow><TreeGutter kind="workbook" w={86} /><WorkbookIcon /><TreeText $ml={5}>ThisWorkbook</TreeText></TreeRow>
                    <TreeRow><TreeGutter kind="forms" w={60} /><TreeFolder /><TreeText $ml={4}>Forms</TreeText></TreeRow>
                    <TreeRow><TreeGutter kind="form" w={86} /><FormIcon size={19} /><TreeText $ml={8} $selected>StudentLookup</TreeText></TreeRow>
                  </TreeList>
                  <VScroll $w={26}>
                    <ScrollArrow $h={25}><Triangle $dir="up" /></ScrollArrow>
                    <ScrollArrow $h={40} />
                    <VThumb $w={21} $h={69}><GripLines /></VThumb>
                    <ScrollArrow $h={30}><Triangle $dir="down" /></ScrollArrow>
                  </VScroll>
                </TreeMain>
                <HScroll>
                  <HArrow $w={27}><Triangle $dir="left" /></HArrow>
                  <HThumb><GripLinesV /></HThumb>
                  <HArrow $w={78}><Triangle $dir="right" /></HArrow>
                </HScroll>
              </TreePane>

              <PaneTitle $mt={13}>
                <span>Properties - txtGender</span>
                <CloseBox><CloseX /></CloseBox>
              </PaneTitle>
              <PropsCombo>
                <strong>txtGender</strong> TextBox
                <ComboButton $w={24}><Triangle $dir="down" $color="#111" /></ComboButton>
              </PropsCombo>
              <Tabs>
                <Tab $active $w={93}>Alphabetic</Tab>
                <Tab $w={101}>Categorized</Tab>
              </Tabs>
              <GridFrame>
                <GridRows>
                  <GridRow>
                    <NameCell $selected>(Name)</NameCell>
                    <ValueCell>txtGender</ValueCell>
                  </GridRow>
                  {propRows.map((r) => (
                    <GridRow key={r.name}>
                      <NameCell>{r.name}</NameCell>
                      <ValueCell>
                        {r.swatch && <Swatch $color={r.swatch} />}
                        {r.value}
                      </ValueCell>
                    </GridRow>
                  ))}
                </GridRows>
                <VScroll $w={26}>
                  <ScrollArrow $h={24}><Triangle $dir="up" /></ScrollArrow>
                  <VThumb $w={21} $h={249} $start><GripLines /></VThumb>
                  <Spacer />
                  <ScrollArrow $h={24}><Triangle $dir="down" /></ScrollArrow>
                </VScroll>
                <FocusRing />
              </GridFrame>
            </LeftCol>

            <Splitter />

            <RightCol>
              <MdiArea>
                <UserForm>
                  <FormTitle>
                    <span>Look up Student Information</span>
                    <FormClose>
                      <svg width="17" height="14" viewBox="0 0 17 14">
                        <path d="M3 2l11 10M14 2L3 12" stroke="#fff" strokeWidth="3.500" />
                      </svg>
                    </FormClose>
                  </FormTitle>
                  <FormCanvas>
                    <FormLabel>Choose a student</FormLabel>
                    <FormCombo>
                      <FormDrop><Triangle $dir="down" $color="#000" /></FormDrop>
                    </FormCombo>
                    <FormLabel $mt={34}>Gender</FormLabel>
                    <SelectionFrame>
                      <SelectedTextBox />
                      {handles.map((h) => (
                        <Handle key={h.x + h.y} $x={h.x} $y={h.y} />
                      ))}
                    </SelectionFrame>
                  </FormCanvas>
                </UserForm>
              </MdiArea>
              <MdiGap />
              <ImmediateTitle><span>Immediate</span></ImmediateTitle>
              <ImmediateBody>
                <ImmediateScroll>
                  <ImmediateArrow><Triangle $dir="left" $color="#111" /></ImmediateArrow>
                  <ImmediateThumb />
                </ImmediateScroll>
              </ImmediateBody>
            </RightCol>
          </Panes>
        </Body>
      </Window>

      <ArrowOverlay width="148" height="68" viewBox="0 0 148 68">
        <path d="M2 31L33 2v16h113v15H2z" fill="#53abe4" />
        <path d="M2 31h144v17H33v17z" fill="#12a2e4" />
        <path d="M33 2v16l-10 0z" fill="#8fcdf2" />
        <path d="M33 65V48l-10-1z" fill="#5fc0ee" />
        <path d="M146 18v30l-4-5V23z" fill="#5fb6ea" />
      </ArrowOverlay>

      <Callout>txtGender textbox</Callout>

      <Watermark>
        <svg width="26" height="30" viewBox="0 0 26 30">
          <path d="M13 0l12 7v15l-12 8L1 22V7z" fill="rgba(110,135,185,.6)" />
          <path d="M13 7l-6 6v9h4v-6h4v6h4v-9z" fill="rgba(200,210,230,.45)" />
        </svg>
        <WatermarkText>
          <WatermarkName>exceldemy</WatermarkName>
          <WatermarkTag>EXCEL · DATA · BI</WatermarkTag>
        </WatermarkText>
      </Watermark>
    </Page>
  );
}
